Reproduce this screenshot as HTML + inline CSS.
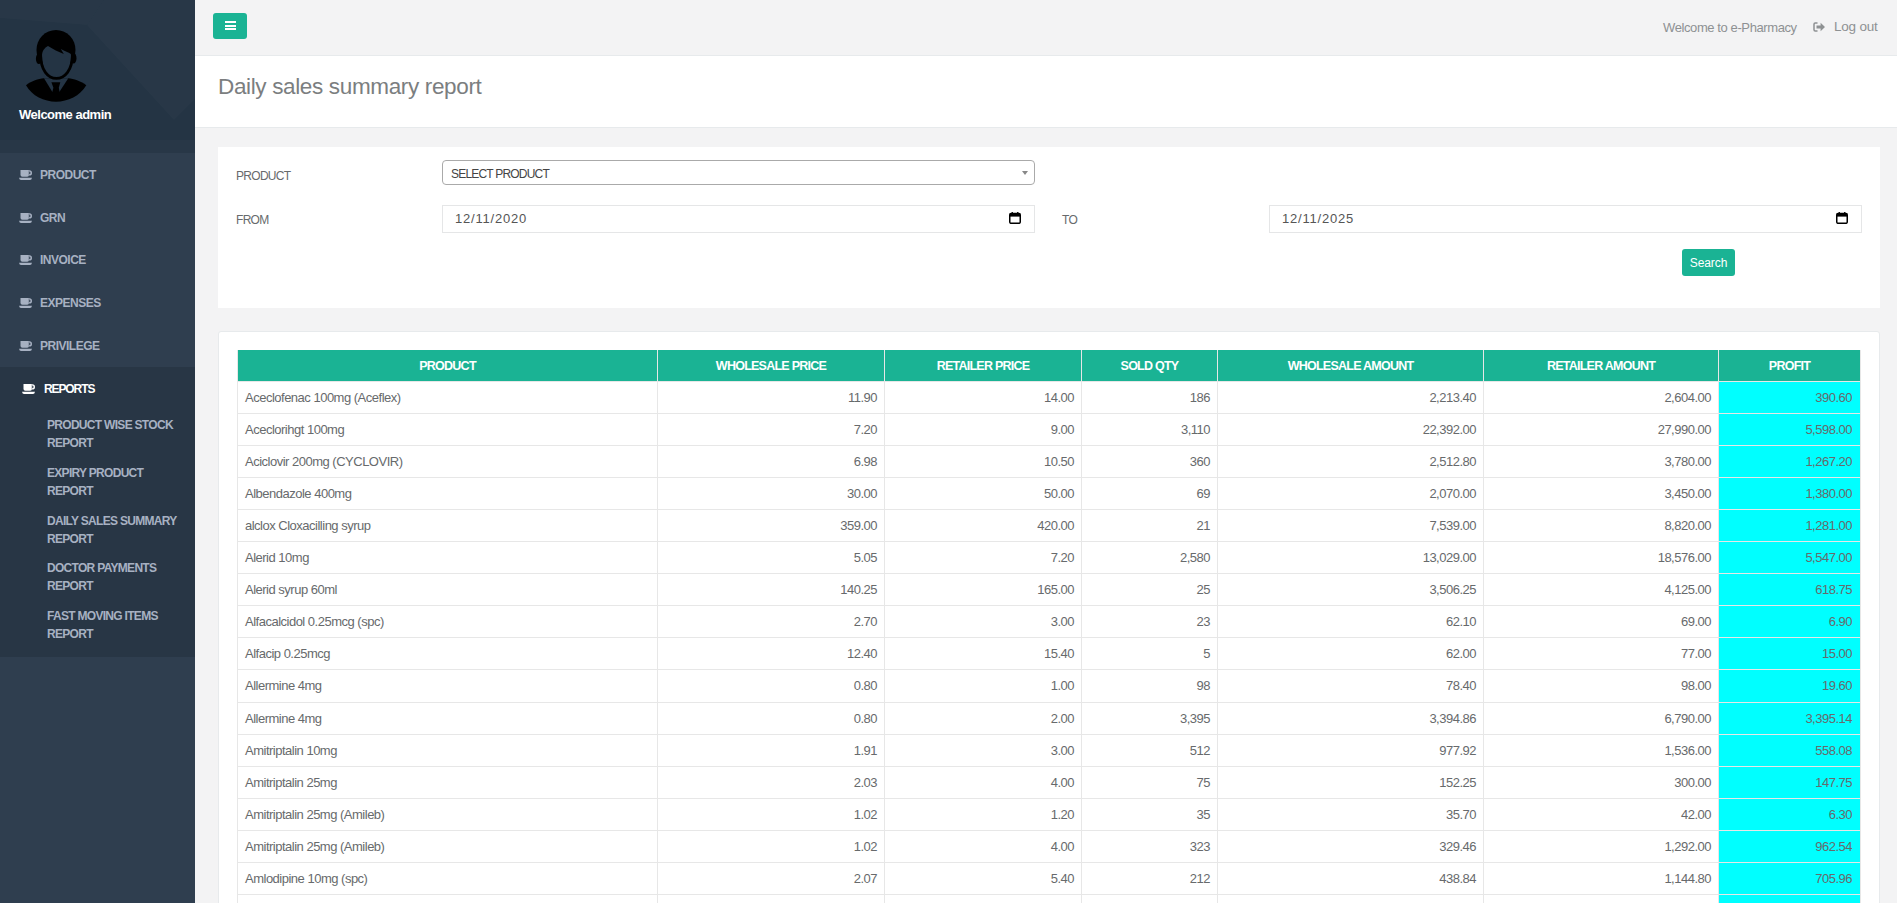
<!DOCTYPE html>
<html><head><meta charset="utf-8">
<style>
*{box-sizing:border-box;margin:0;padding:0}
html,body{width:1897px;height:903px;overflow:hidden;background:#f3f3f4;font-family:"Liberation Sans",sans-serif;color:#676a6c;font-size:13px}
.abs{position:absolute}
#side{position:absolute;left:0;top:0;width:195px;height:903px;background:#2f3e4f}
#prof{position:absolute;left:0;top:0;width:195px;height:153px;background:#243444;overflow:hidden}
#prof .welcome{position:absolute;left:19px;top:107px;color:#fff;font-weight:bold;font-size:13px;letter-spacing:-0.5px;white-space:nowrap}
.mi{position:absolute;left:40px;color:#a7b1c2;font-weight:bold;font-size:12px;letter-spacing:-0.5px;white-space:nowrap;line-height:15px}
.ic{position:absolute;left:19px}
#active{position:absolute;left:0;top:367px;width:195px;height:290px;background:#283645}
.sub{position:absolute;left:47px;color:#a7b1c2;font-weight:bold;font-size:12px;letter-spacing:-0.7px;line-height:17.5px;white-space:nowrap}
#top{position:absolute;left:195px;top:0;width:1702px;height:56px;background:#f3f3f4;border-bottom:1px solid #e7eaec}
#tog{position:absolute;left:213px;top:13px;width:34px;height:26px;background:#1ab394;border-radius:3px}
#head{position:absolute;left:195px;top:56px;width:1702px;height:72px;background:#fff;border-bottom:1px solid #e7eaec}
#head h2{position:absolute;left:23px;top:18px;font-weight:normal;font-size:22.5px;letter-spacing:-0.35px;color:#7b7e80;white-space:nowrap}
.box{position:absolute;background:#fff}
.lbl{position:absolute;font-size:12px;letter-spacing:-0.7px;color:#676a6c;line-height:15px;margin-top:1px}
.inp{position:absolute;border:1px solid #e5e6e7;background:#fff;color:#555;font-size:13px}
table{position:absolute;left:237px;top:350px;border-collapse:collapse;table-layout:fixed}
th{background:#1ab394;color:#fff;font-weight:bold;font-size:12.5px;letter-spacing:-0.75px;height:31px;border:1px solid #e7e7e7;border-top:0;text-align:center;padding:2px 0 0 0}
td{height:32px;border:1px solid #e7e7e7;text-align:right;padding:0 7px 0 7px;font-size:13px;letter-spacing:-0.5px;color:#676a6c;white-space:nowrap}
td:first-child{text-align:left}
td.p{background:#00ffff;padding-right:8px}
</style></head><body>
<div id="side">
  <div id="prof">
    <svg class="abs" style="left:0;top:0" width="195" height="153" viewBox="0 0 195 153">
      <polygon points="87,25 104,0 195,0 195,99 174,120" fill="#ffffff" opacity="0.02"/>
      <polygon points="0,0 104,0 87,25 0,18" fill="#ffffff" opacity="0.018"/>
      <rect x="0" y="140" width="195" height="13" fill="#ffffff" opacity="0.02"/>
      <g fill="#000">
        <ellipse cx="56" cy="50" rx="19.5" ry="20"/>
        <ellipse cx="38.8" cy="58.8" rx="2.9" ry="5.2"/>
        <ellipse cx="73.6" cy="58.3" rx="2.9" ry="5.2"/>
      </g>
      <path d="M26,85.3 C32,80.5 38,79.2 43.9,78.3 L68.3,78.3 C74,79.2 80,80.5 86.3,85.3 C80,96 68,101.7 56,101.7 C44,101.7 32,96 26,85.3 Z" fill="#000"/>
      <polygon points="44,78.3 68.3,78.3 59.3,92 52.4,92" fill="#243444"/>
      <polygon points="51.4,82.3 60.3,82.3 58.8,87.8 59.8,93 52,93 53.4,87.8" fill="#000"/>
      <path d="M42,56 C42,51 44.5,47.8 48,46 C53,49 58.5,52 63.8,54 L60.8,49 C65,51 68.5,52.5 70.8,54 C71,55 71,56 71,57 C71,69 64.5,77 56.4,77 C48.3,77 42,69 42,56 Z" fill="#243444"/>
      <path d="M40.6,55 C40.6,70 48,78.4 56.4,78.4 C64.8,78.4 72.4,70 72.4,55" stroke="#000" stroke-width="2.8" fill="none"/>
    </svg>
    <div class="welcome">Welcome admin</div>
  </div>
  <div id="active"></div>
  <svg class="ic" style="left:19px;top:170px" width="13" height="10" viewBox="0 0 13 10"><path d="M1.5,0 H10 V5 Q10,6.8 8.2,6.8 H3.3 Q1.5,6.8 1.5,5 Z M9.8,0.3 H10.4 A2.6,2.6 0 0 1 10.4,5.5 H9.8 Z M10.2,1.6 V4.2 A1.3,1.3 0 0 0 10.2,1.6 Z" fill="#a7b1c2" fill-rule="evenodd"/><path d="M0,7.7 H13 Q12.6,9.9 11,9.9 H2 Q0.4,9.9 0,7.7 Z" fill="#a7b1c2"/></svg>
<div class="mi" style="top:168px">PRODUCT</div>
<svg class="ic" style="left:19px;top:213px" width="13" height="10" viewBox="0 0 13 10"><path d="M1.5,0 H10 V5 Q10,6.8 8.2,6.8 H3.3 Q1.5,6.8 1.5,5 Z M9.8,0.3 H10.4 A2.6,2.6 0 0 1 10.4,5.5 H9.8 Z M10.2,1.6 V4.2 A1.3,1.3 0 0 0 10.2,1.6 Z" fill="#a7b1c2" fill-rule="evenodd"/><path d="M0,7.7 H13 Q12.6,9.9 11,9.9 H2 Q0.4,9.9 0,7.7 Z" fill="#a7b1c2"/></svg>
<div class="mi" style="top:211px">GRN</div>
<svg class="ic" style="left:19px;top:255px" width="13" height="10" viewBox="0 0 13 10"><path d="M1.5,0 H10 V5 Q10,6.8 8.2,6.8 H3.3 Q1.5,6.8 1.5,5 Z M9.8,0.3 H10.4 A2.6,2.6 0 0 1 10.4,5.5 H9.8 Z M10.2,1.6 V4.2 A1.3,1.3 0 0 0 10.2,1.6 Z" fill="#a7b1c2" fill-rule="evenodd"/><path d="M0,7.7 H13 Q12.6,9.9 11,9.9 H2 Q0.4,9.9 0,7.7 Z" fill="#a7b1c2"/></svg>
<div class="mi" style="top:253px">INVOICE</div>
<svg class="ic" style="left:19px;top:298px" width="13" height="10" viewBox="0 0 13 10"><path d="M1.5,0 H10 V5 Q10,6.8 8.2,6.8 H3.3 Q1.5,6.8 1.5,5 Z M9.8,0.3 H10.4 A2.6,2.6 0 0 1 10.4,5.5 H9.8 Z M10.2,1.6 V4.2 A1.3,1.3 0 0 0 10.2,1.6 Z" fill="#a7b1c2" fill-rule="evenodd"/><path d="M0,7.7 H13 Q12.6,9.9 11,9.9 H2 Q0.4,9.9 0,7.7 Z" fill="#a7b1c2"/></svg>
<div class="mi" style="top:296px">EXPENSES</div>
<svg class="ic" style="left:19px;top:341px" width="13" height="10" viewBox="0 0 13 10"><path d="M1.5,0 H10 V5 Q10,6.8 8.2,6.8 H3.3 Q1.5,6.8 1.5,5 Z M9.8,0.3 H10.4 A2.6,2.6 0 0 1 10.4,5.5 H9.8 Z M10.2,1.6 V4.2 A1.3,1.3 0 0 0 10.2,1.6 Z" fill="#a7b1c2" fill-rule="evenodd"/><path d="M0,7.7 H13 Q12.6,9.9 11,9.9 H2 Q0.4,9.9 0,7.7 Z" fill="#a7b1c2"/></svg>
<div class="mi" style="top:339px">PRIVILEGE</div>
<svg class="ic" style="left:22px;top:384px" width="13" height="10" viewBox="0 0 13 10"><path d="M1.5,0 H10 V5 Q10,6.8 8.2,6.8 H3.3 Q1.5,6.8 1.5,5 Z M9.8,0.3 H10.4 A2.6,2.6 0 0 1 10.4,5.5 H9.8 Z M10.2,1.6 V4.2 A1.3,1.3 0 0 0 10.2,1.6 Z" fill="#fff" fill-rule="evenodd"/><path d="M0,7.7 H13 Q12.6,9.9 11,9.9 H2 Q0.4,9.9 0,7.7 Z" fill="#fff"/></svg>
<div class="mi" style="left:44px;top:382px;color:#fff;letter-spacing:-1.1px">REPORTS</div>
<div class="sub" style="top:417px">PRODUCT WISE STOCK<br>REPORT</div>
<div class="sub" style="top:465px">EXPIRY PRODUCT<br>REPORT</div>
<div class="sub" style="top:513px">DAILY SALES SUMMARY<br>REPORT</div>
<div class="sub" style="top:560px">DOCTOR PAYMENTS<br>REPORT</div>
<div class="sub" style="top:608px">FAST MOVING ITEMS<br>REPORT</div>
</div>
<div id="top">
  <div class="abs" style="left:1468px;top:20px;font-size:13px;letter-spacing:-0.4px;color:#8e9193;white-space:nowrap">Welcome to e-Pharmacy</div>
  <svg class="abs" style="left:1618px;top:22px" width="13" height="10" viewBox="0 0 13 10"><path d="M4.5,1 H2.2 Q1,1 1,2.2 V7.8 Q1,9 2.2,9 H4.5" stroke="#8e9193" stroke-width="1.5" fill="none"/><path d="M3.5,3.6 H7.6 V0.8 L12,5 L7.6,9.2 V6.4 H3.5 Z" fill="#8e9193"/></svg>
  <div class="abs" style="left:1639px;top:19px;font-size:13.5px;letter-spacing:-0.2px;color:#8e9193;white-space:nowrap">Log out</div>
</div>
<div id="tog">
  <div class="abs" style="left:11.5px;top:8.2px;width:11.3px;height:1.8px;background:#fff"></div>
  <div class="abs" style="left:11.5px;top:11.9px;width:11.3px;height:1.8px;background:#fff"></div>
  <div class="abs" style="left:11.5px;top:15.2px;width:11.3px;height:1.8px;background:#fff"></div>
</div>
<div id="head"><h2>Daily sales summary report</h2></div>
<div class="box" style="left:218px;top:147px;width:1662px;height:161px"></div>
<div class="lbl" style="left:236px;top:168px">PRODUCT</div>
<div class="lbl" style="left:236px;top:212px">FROM</div>
<div class="lbl" style="left:1062px;top:212px">TO</div>
<div class="inp" style="left:442px;top:160px;width:593px;height:25px;border:1px solid #aaa;border-radius:4px;color:#444">
  <div class="abs" style="left:8px;top:6px;font-size:12px;letter-spacing:-0.8px">SELECT PRODUCT</div>
  <div class="abs" style="left:579px;top:10px;width:0;height:0;border-left:3.5px solid transparent;border-right:3.5px solid transparent;border-top:4px solid #888"></div>
</div>
<div class="inp" style="left:442px;top:205px;width:593px;height:28px">
  <div class="abs" style="left:12px;top:5px;letter-spacing:0.8px">12/11/2020</div>
  <svg class="abs" style="left:566px;top:6px" width="12" height="12" viewBox="0 0 12 12"><rect x="2.6" y="0" width="1.3" height="2" fill="#000"/><rect x="8.1" y="0" width="1.3" height="2" fill="#000"/><rect x="0.75" y="1.6" width="10.5" height="9.7" rx="1.3" stroke="#000" stroke-width="1.5" fill="none"/><rect x="0.75" y="1.6" width="10.5" height="3" fill="#000"/></svg>
</div>
<div class="inp" style="left:1269px;top:205px;width:593px;height:28px">
  <div class="abs" style="left:12px;top:5px;letter-spacing:0.8px">12/11/2025</div>
  <svg class="abs" style="left:566px;top:6px" width="12" height="12" viewBox="0 0 12 12"><rect x="2.6" y="0" width="1.3" height="2" fill="#000"/><rect x="8.1" y="0" width="1.3" height="2" fill="#000"/><rect x="0.75" y="1.6" width="10.5" height="9.7" rx="1.3" stroke="#000" stroke-width="1.5" fill="none"/><rect x="0.75" y="1.6" width="10.5" height="3" fill="#000"/></svg>
</div>
<div class="abs" style="left:1682px;top:249px;width:53px;height:27px;background:#1ab394;border-radius:3px;color:#fff;font-size:12px;letter-spacing:-0.1px;text-align:center;line-height:29px">Search</div>
<div class="box" style="left:218px;top:331px;width:1662px;height:600px;border:1px solid #e7eaec;border-radius:3px"></div>
<table>
<colgroup><col style="width:420px"><col style="width:227px"><col style="width:197px"><col style="width:136px"><col style="width:266px"><col style="width:235px"><col style="width:142px"></colgroup>
<tr><th>PRODUCT</th><th>WHOLESALE PRICE</th><th>RETAILER PRICE</th><th>SOLD QTY</th><th>WHOLESALE AMOUNT</th><th>RETAILER AMOUNT</th><th>PROFIT</th></tr>
<tr><td>Aceclofenac 100mg (Aceflex)</td><td>11.90</td><td>14.00</td><td>186</td><td>2,213.40</td><td>2,604.00</td><td class="p">390.60</td></tr>
<tr><td>Aceclorihgt 100mg</td><td>7.20</td><td>9.00</td><td>3,110</td><td>22,392.00</td><td>27,990.00</td><td class="p">5,598.00</td></tr>
<tr><td>Aciclovir 200mg (CYCLOVIR)</td><td>6.98</td><td>10.50</td><td>360</td><td>2,512.80</td><td>3,780.00</td><td class="p">1,267.20</td></tr>
<tr><td>Albendazole 400mg</td><td>30.00</td><td>50.00</td><td>69</td><td>2,070.00</td><td>3,450.00</td><td class="p">1,380.00</td></tr>
<tr><td>alclox Cloxacilling syrup</td><td>359.00</td><td>420.00</td><td>21</td><td>7,539.00</td><td>8,820.00</td><td class="p">1,281.00</td></tr>
<tr><td>Alerid 10mg</td><td>5.05</td><td>7.20</td><td>2,580</td><td>13,029.00</td><td>18,576.00</td><td class="p">5,547.00</td></tr>
<tr><td>Alerid syrup 60ml</td><td>140.25</td><td>165.00</td><td>25</td><td>3,506.25</td><td>4,125.00</td><td class="p">618.75</td></tr>
<tr><td>Alfacalcidol 0.25mcg (spc)</td><td>2.70</td><td>3.00</td><td>23</td><td>62.10</td><td>69.00</td><td class="p">6.90</td></tr>
<tr><td>Alfacip 0.25mcg</td><td>12.40</td><td>15.40</td><td>5</td><td>62.00</td><td>77.00</td><td class="p">15.00</td></tr>
<tr style="height:33px"><td>Allermine 4mg</td><td>0.80</td><td>1.00</td><td>98</td><td>78.40</td><td>98.00</td><td class="p">19.60</td></tr>
<tr><td>Allermine 4mg</td><td>0.80</td><td>2.00</td><td>3,395</td><td>3,394.86</td><td>6,790.00</td><td class="p">3,395.14</td></tr>
<tr><td>Amitriptalin 10mg</td><td>1.91</td><td>3.00</td><td>512</td><td>977.92</td><td>1,536.00</td><td class="p">558.08</td></tr>
<tr><td>Amitriptalin 25mg</td><td>2.03</td><td>4.00</td><td>75</td><td>152.25</td><td>300.00</td><td class="p">147.75</td></tr>
<tr><td>Amitriptalin 25mg (Amileb)</td><td>1.02</td><td>1.20</td><td>35</td><td>35.70</td><td>42.00</td><td class="p">6.30</td></tr>
<tr><td>Amitriptalin 25mg (Amileb)</td><td>1.02</td><td>4.00</td><td>323</td><td>329.46</td><td>1,292.00</td><td class="p">962.54</td></tr>
<tr><td>Amlodipine 10mg (spc)</td><td>2.07</td><td>5.40</td><td>212</td><td>438.84</td><td>1,144.80</td><td class="p">705.96</td></tr>
<tr><td>Amoxicillin 250mg</td><td>3.00</td><td>5.00</td><td>100</td><td>300.00</td><td>500.00</td><td class="p">200.00</td></tr>
</table>
</body></html>
